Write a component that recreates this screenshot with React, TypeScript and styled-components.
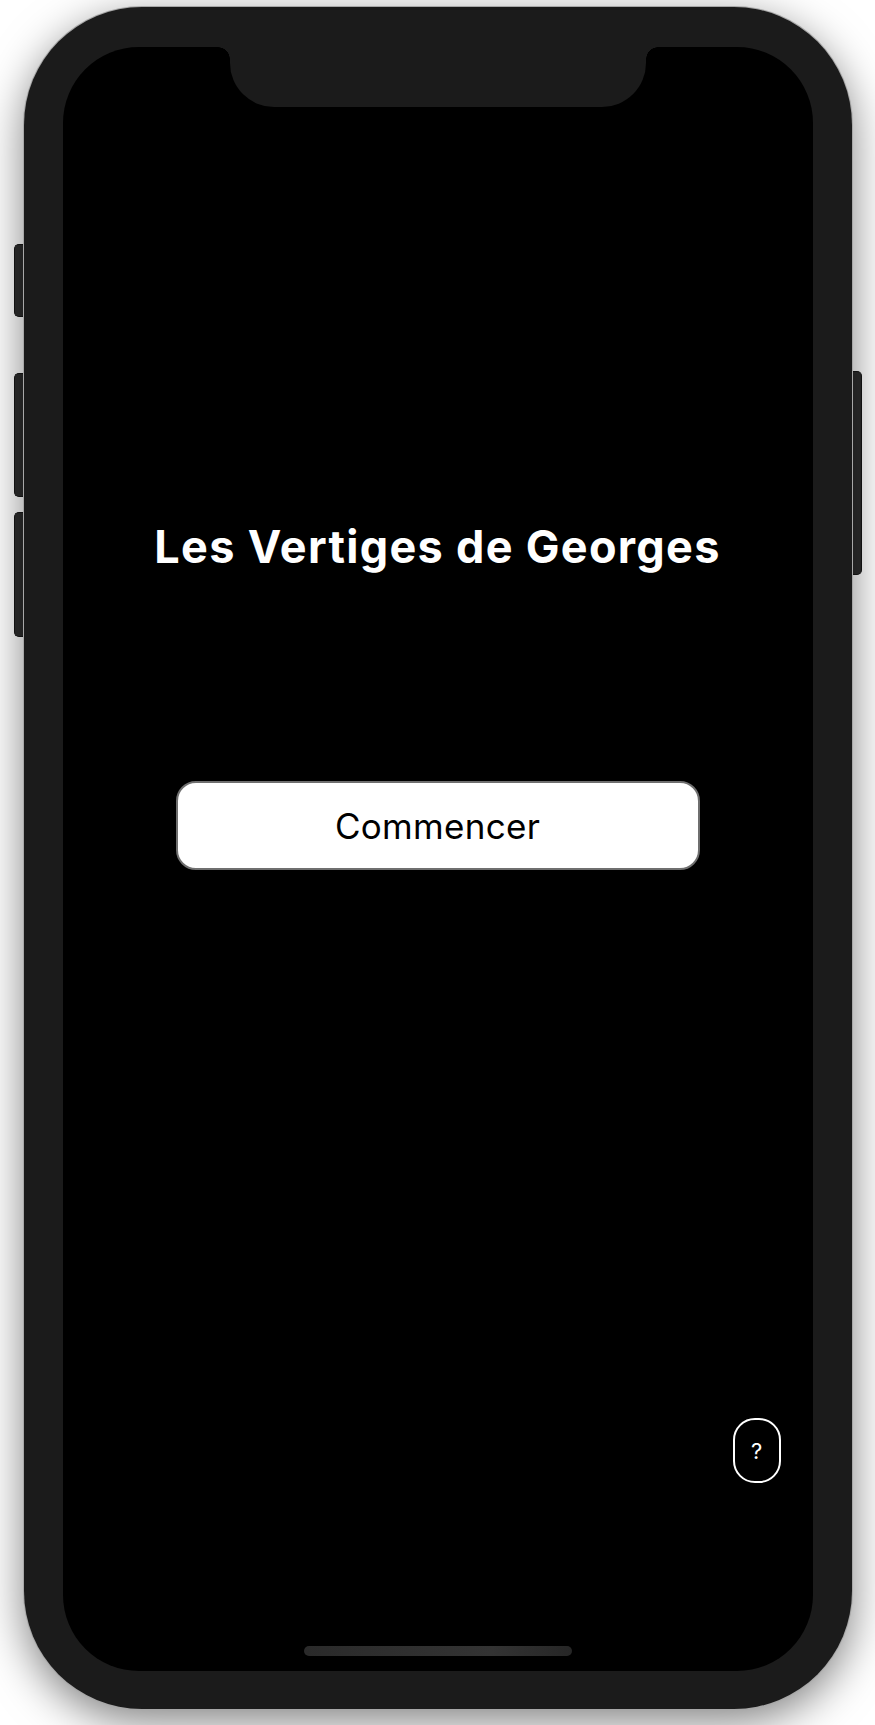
import React from 'react';
import styled, { createGlobalStyle } from 'styled-components';

const GlobalStyle = createGlobalStyle`
    html, body {
        margin: 0;
        padding: 0;
        background: #ffffff;
    }
    body {
        font-family: Inter, "Noto Sans", sans-serif;
        -webkit-font-smoothing: antialiased;
    }
`

const Page = styled.div`
    width: 875px;
    min-height: 1725px;
    display: flex;
    justify-content: center;
    padding-top: 7px;
    box-sizing: border-box;
`

const Device = styled.div`
    display: flex;
    align-items: flex-start;
`

const Rail = styled.div<{ $top: number; $side: 'left' | 'right' }>`
    width: 11px;
    display: flex;
    flex-direction: column;
    padding-top: ${(p) => p.$top}px;
    ${(p) => (p.$side === 'left' ? 'margin-right: -1px;' : 'margin-left: -1px;')}
`

const SideButton = styled.div<{ $side: 'left' | 'right'; $height: number; $gap?: number }>`
    height: ${(p) => p.$height}px;
    margin-top: ${(p) => p.$gap ?? 0}px;
    background: #2d2d2d;
    border: 1px solid #161616;
    ${(p) => (p.$side === 'left'
        ? 'border-right: none; border-radius: 5px 0 0 5px;'
        : 'border-left: none; border-radius: 0 5px 5px 0;')}
`

const Phone = styled.div`
    position: relative;
    width: 828px;
    height: 1702px;
    padding: 40px 39px 38px;
    box-sizing: border-box;
    background: #1b1b1b;
    border-radius: 118px;
    box-shadow: 0 0 0 1px #a8a8a8, 0 12px 44px rgba(0, 0, 0, 0.5);
`

const Screen = styled.div`
    position: relative;
    width: 750px;
    height: 1624px;
    background: #000;
    border-radius: 76px;
    overflow: hidden;
    display: flex;
    flex-direction: column;
    align-items: center;
    padding: 474px 0 15px;
    box-sizing: border-box;
`

const Notch = styled.div`
    position: absolute;
    top: 0;
    left: 167px;
    width: 416px;
    height: 60px;
    background: #1b1b1b;
    border-radius: 0 0 44px 44px;

    &::before, &::after {
        content: '';
        position: absolute;
        top: 0;
        width: 12px;
        height: 12px;
    }
    &::before {
        left: -12px;
        background: radial-gradient(circle at 0 100%, transparent 11.5px, #1b1b1b 12px);
    }
    &::after {
        right: -12px;
        background: radial-gradient(circle at 100% 100%, transparent 11.5px, #1b1b1b 12px);
    }
`

const Title = styled.h1`
    margin: 0 0 208px;
    font-family: Inter, "Noto Sans", sans-serif;
    font-weight: 700;
    font-size: 45px;
    letter-spacing: 1.3px;
    line-height: 52px;
    color: #fff;
    text-align: center;
`

const StartButton = styled.button`
    width: 524px;
    height: 89px;
    background: #fff;
    border: 2px solid #6f6f6f;
    border-radius: 20px;
    font-family: Inter, "Noto Sans", sans-serif;
    font-size: 35px;
    letter-spacing: 0.3px;
    font-weight: 400;
    color: #000;
    cursor: pointer;
`

const Spacer = styled.div`
    flex: 1;
`

const HelpButton = styled.button`
    align-self: flex-end;
    margin: 0 32px 163px 0;
    width: 48px;
    height: 65px;
    background: transparent;
    border: 2px solid #fff;
    border-radius: 22px;
    color: #fff;
    font-family: Inter, "Noto Sans", sans-serif;
    font-size: 22px;
    padding: 0;
    display: flex;
    align-items: center;
    justify-content: center;
`

const HomeIndicator = styled.div`
    width: 268px;
    height: 10px;
    border-radius: 5px;
    background: linear-gradient(90deg, #2a2a2a, #333 70%, #262626);
`

const App: React.FC = () => (
    <>
        <GlobalStyle />
        <Page>
            <Device>
                <Rail $side="left" $top={237}>
                    <SideButton $side="left" $height={71} />
                    <SideButton $side="left" $height={122} $gap={56} />
                    <SideButton $side="left" $height={123} $gap={15} />
                </Rail>
                <Phone>
                    <Screen>
                        <Notch />
                        <Title>Les Vertiges de Georges</Title>
                        <StartButton>Commencer</StartButton>
                        <Spacer />
                        <HelpButton>?</HelpButton>
                        <HomeIndicator />
                    </Screen>
                </Phone>
                <Rail $side="right" $top={364}>
                    <SideButton $side="right" $height={202} />
                </Rail>
            </Device>
        </Page>
    </>
);

export default App;
